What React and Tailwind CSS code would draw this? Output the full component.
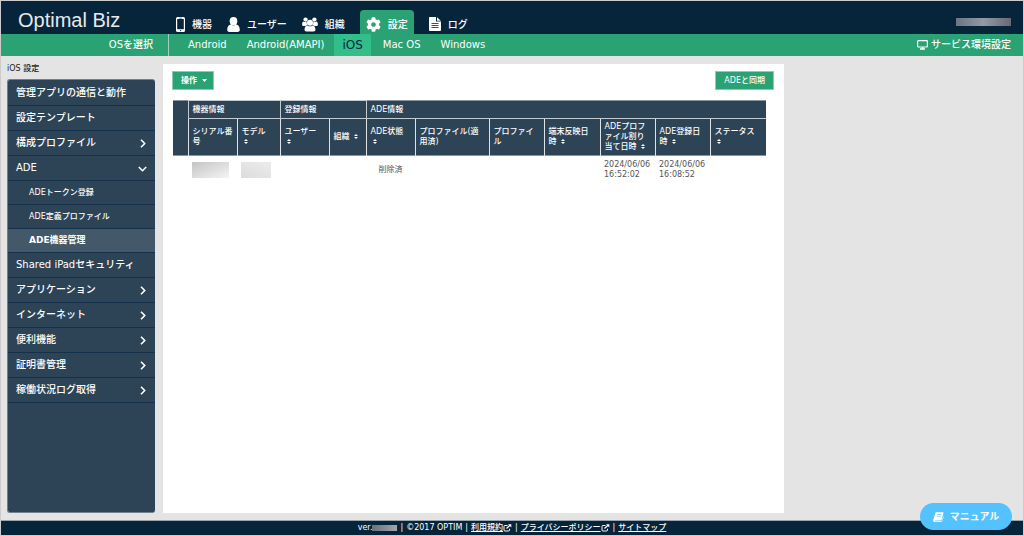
import React from 'react';
import { FaCog } from 'react-icons/fa';

const PhoneIcon = () => (
  <svg width="9" height="15" viewBox="0 0 9 15" fill="none">
    <rect width="9" height="15" rx="1.5" fill="#fff" />
    <rect x="1.2" y="2" width="6.6" height="10.2" fill="#06253b" />
    <rect x="3.2" y="0.8" width="2.6" height="0.6" fill="#06253b" />
    <circle cx="4.5" cy="13.6" r="0.7" fill="#06253b" />
  </svg>
);

const UserIcon = () => (
  <svg width="13" height="15" viewBox="0 0 13 15" fill="#fff">
    <ellipse cx="6.5" cy="4.2" rx="3.8" ry="4.2" />
    <path d="M0.2 12.8c0-3 1.4-5 3.8-5.2 1.500 1.300 3.500 1.300 5 0 2.400.2 3.800 2.200 3.800 5.200 0 1.300-.8 2.200-2 2.200H2.200C1 15 .2 14.100.2 12.800z" />
  </svg>
);

const GroupIcon = () => (
  <svg width="16" height="15" viewBox="0 0 17 15" fill="#fff">
    <circle cx="3.8" cy="2.300" r="2.300" />
    <circle cx="13.200" cy="2.300" r="2.300" />
    <path d="M.1 7.500c0-2 .7-3.300 1.800-3.300 1 .8 2.300.8 3.200.2-.4 1.400 0 2.600.9 3.500-1 .1-1.800.7-2.400 1.300H1.800C.9 9.200.1 8.600.1 7.500zM16.900 7.500c0-2-.7-3.300-1.800-3.300-1 .8-2.300.8-3.200.2.4 1.400 0 2.600-.9 3.500 1 .1 1.800.7 2.400 1.300h1.800c.9 0 1.700-.6 1.700-1.700z" />
    <circle cx="8.500" cy="5.600" r="3.200" />
    <path d="M2.700 13.200c0-2.700 1-4.500 3.100-4.700 1.500 1.300 3.900 1.300 5.400 0 2.100.2 3.100 2 3.100 4.700 0 1.100-.7 1.800-1.800 1.800h-8c-1.100 0-1.800-.7-1.800-1.800z" />
  </svg>
);

const LogIcon = () => (
  <svg width="12" height="14" viewBox="0 0 12 14">
    <path d="M.8 0H7v4.500h5v8.700c0 .5-.3.8-.8.8H.8c-.5 0-.8-.3-.8-.8V.8C0 .3.3 0 .8 0zM8 .2 11.800 3.700H8z" fill="#fff" />
    <path d="M2.500 6.500h7M2.500 8.500h7M2.500 10.500h7" stroke="#06253b" strokeWidth="0.8" />
  </svg>
);

const MonitorIcon = () => (
  <svg width="11" height="10" viewBox="0 0 11 10" fill="none" stroke="#fff">
    <rect x="0.600" y="0.600" width="9.800" height="6.400" rx="0.800" strokeWidth="1.200" />
    <path d="M3 9h5M5.500 7v2" strokeWidth="1.400" />
  </svg>
);

const ExternalIcon = () => (
  <svg width="9" height="8" viewBox="0 0 9 8" fill="none" stroke="#fff" className="inline-block align-middle">
    <path d="M4.500 1.500H2C1.300 1.500 1 1.800 1 2.500V6c0 .7.3 1 1 1h3.500c.7 0 1-.3 1-1V4.800" strokeWidth="1" />
    <path d="M3.500 4.500 7 1.200" strokeWidth="1.300" />
    <path d="M5 .2h3.300v3.300z" fill="#fff" stroke="none" />
  </svg>
);

const BookIcon = () => (
  <svg width="11" height="10" viewBox="0 0 11 10">
    <path d="M3.500.3h6.300c.6 0 .9.4.7 1L8.600 7.800c-.1.500-.5.800-1 .8H2c-.5 0-.6.7 0 .7h6.200c.4 0 .7-.2.800-.6l1.300-4.500.3.8-1.300 4.200c-.2.500-.6.800-1.100.8H1.800C.5 10-.1 8.900.3 7.800L2.300 1.200c.2-.6.600-.9 1.200-.9z" fill="#fff" />
    <path d="M4.300 2.500h4M3.800 4.200h4" stroke="#53c2ff" strokeWidth="0.700" />
  </svg>
);

const Chevron = ({ open }) => (
  <svg width="9" height="9" viewBox="0 0 9 9" fill="none" stroke="#fff" strokeWidth="1.600">
    <path d={open ? 'M.8 3 4.500 6.700 8.200 3' : 'M3 .8 6.700 4.500 3 8.200'} />
  </svg>
);

const SortIcon = () => (
  <svg width="4" height="5" viewBox="0 0 4 5" fill="#fff" className="mx-[2px] inline-block">
    <path d="M0 2 2 0l2 2zM0 3l2 2 2-2z" />
  </svg>
);

const tabs = [
  { label: '機器', icon: <PhoneIcon /> },
  { label: 'ユーザー', icon: <UserIcon /> },
  { label: '組織', icon: <GroupIcon /> },
  { label: '設定', icon: <FaCog size={15} />, active: true },
  { label: 'ログ', icon: <LogIcon /> },
];

const platforms = ['Android', 'Android(AMAPI)', 'iOS', 'Mac OS', 'Windows'];

const menu = [
  { label: '管理アプリの通信と動作' },
  { label: '設定テンプレート' },
  { label: '構成プロファイル', more: true },
  {
    label: 'ADE',
    more: true,
    children: ['ADEトークン登録', 'ADE定義プロファイル', 'ADE機器管理'],
  },
  { label: 'Shared iPadセキュリティ' },
  { label: 'アプリケーション', more: true },
  { label: 'インターネット', more: true },
  { label: '便利機能', more: true },
  { label: '証明書管理', more: true },
  { label: '稼働状況ログ取得', more: true },
];

const columns = [
  { label: 'シリアル番号' },
  { label: 'モデル', sort: true },
  { label: 'ユーザー', sort: true },
  { label: '組織', sort: true },
  { label: 'ADE状態', sort: true },
  { label: 'プロファイル(適用済)' },
  { label: 'プロファイル' },
  { label: '端末反映日時', sort: true },
  { label: 'ADEプロファイル割り当て日時', sort: true },
  { label: 'ADE登録日時', sort: true },
  { label: 'ステータス', sort: true },
];

const Header = () => (
  <header className="text-white">
    <div className="flex h-[33px] items-end bg-[#06253b]">
      <h1 className="w-[169px] shrink-0 pl-[17px] font-['Liberation_Sans',sans-serif] text-[20px] leading-[28px] text-[#e6e9eb]">
        Optimal Biz
      </h1>
      <nav className="flex gap-[3px]">
        {tabs.map((tab) => (
          <a
            key={tab.label}
            href="#"
            className={`flex h-6 items-center gap-[7px] rounded-t px-[6px] pt-[4px] text-[10px] font-medium ${
              tab.active ? 'mx-[6px] bg-[#2ba274]' : ''
            }`}
          >
            {tab.icon}
            {tab.label}
          </a>
        ))}
      </nav>
      <div className="mb-2 ml-auto mr-3 h-2 w-[55px] bg-linear-to-r from-[#6c7485] via-[#929aa6] to-[#6b6775]" />
    </div>
    <div className="flex h-[22px] items-stretch bg-[#2ba274] text-[10px] font-medium leading-[22px]">
      <div className="w-[168px] shrink-0 border-r border-[#9fd2be] pr-[15px] text-right">OSを選択</div>
      <nav className="flex pl-[9px]">
        {platforms.map((name) =>
          name === 'iOS' ? (
            <a key={name} href="#" className="mr-[2px] bg-[#31be89] px-2 text-[12px] text-[#06253b]">
              {name}
            </a>
          ) : (
            <a key={name} href="#" className="px-[10px]">
              {name}
            </a>
          )
        )}
      </nav>
      <a href="#" className="ml-auto mr-3 flex items-center gap-[3px]">
        <MonitorIcon />
        サービス環境設定
      </a>
    </div>
  </header>
);

const Sidebar = () => (
  <aside className="flex w-[148px] shrink-0 flex-col">
    <h2 className="h-[15px] text-[8px] font-medium leading-[10px] text-[#222]">iOS 設定</h2>
    <ul className="flex-1 rounded-[3px] border-b border-l border-t border-[#72808b] bg-[#2d4457] pt-px text-[10px] font-medium text-white">
      {menu.map((item) => (
        <li key={item.label}>
          <a href="#" className="flex h-[25px] items-center justify-between border-b border-[#15304a] px-2 leading-6">
            {item.label}
            {item.more && <Chevron open={Boolean(item.children)} />}
          </a>
          {item.children && (
            <ul>
              {item.children.map((child) => (
                <li key={child}>
                  <a
                    href="#"
                    className={`flex h-6 items-center border-b border-[#15304a] pl-[21px] ${
                      child === 'ADE機器管理' ? 'bg-[#435969] text-[9px] font-bold' : 'text-[8px]'
                    }`}
                  >
                    {child}
                  </a>
                </li>
              ))}
            </ul>
          )}
        </li>
      ))}
    </ul>
  </aside>
);

const DeviceTable = () => (
  <table className="mt-[10px] w-full table-fixed border-collapse text-left text-[8px] leading-[10px]">
    <colgroup>
      <col className="w-[15px]" />
      <col className="w-[49px]" />
      <col className="w-[43px]" />
      <col className="w-[49px]" />
      <col className="w-[37px]" />
      <col className="w-[49px]" />
      <col className="w-[74px]" />
      <col className="w-[55px]" />
      <col className="w-[56px]" />
      <col className="w-[55px]" />
      <col className="w-[55px]" />
      <col />
    </colgroup>
    <thead className="bg-[#2d4457] text-white">
      <tr className="h-[18px] border-t border-[#8996a0]">
        <th rowSpan={2} aria-label="選択" />
        <th colSpan={2} className="border border-[#c3cad0] px-1 font-medium">機器情報</th>
        <th colSpan={2} className="border border-[#c3cad0] px-1 font-medium">登録情報</th>
        <th colSpan={7} className="border-b border-l border-[#c3cad0] px-1 font-medium">ADE情報</th>
      </tr>
      <tr className="h-[37px] border-b border-[#8996a0]">
        {columns.map((col) => (
          <th key={col.label} className="border-l border-t border-[#dfe3e6] px-1 font-medium">
            {col.label}
            {col.sort && ' '}
            {col.sort && <SortIcon />}
          </th>
        ))}
      </tr>
    </thead>
    <tbody className="text-[#555]">
      <tr className="h-[28px]">
        <td />
        <td className="px-1">
          <div className="h-4 w-[37px] bg-linear-to-br from-[#c4c4c4] via-[#dcdcdc] to-[#f5f5f5]" />
        </td>
        <td className="px-1">
          <div className="h-4 w-[30px] bg-linear-to-tr from-[#dcdcdc] to-[#ececec]" />
        </td>
        <td />
        <td />
        <td className="text-center">削除済</td>
        <td />
        <td />
        <td />
        <td className="px-1">2024/06/06 16:52:02</td>
        <td className="px-1">2024/06/06 16:08:52</td>
        <td />
      </tr>
    </tbody>
  </table>
);

const Footer = () => (
  <footer className="flex h-[15px] items-center justify-center gap-[3px] border-t border-[#9aa5ac] bg-[#06253b] text-[8px] font-medium leading-[12px] text-white">
    <span className="flex items-center">
      ver.
      <span className="h-[6px] w-[25px] bg-linear-to-r from-[#66737f] to-[#a5a5a5]" />
    </span>
    <span>|</span>
    <span>©2017 OPTIM</span>
    <span>|</span>
    <a href="#" className="underline">利用規約<ExternalIcon /></a>
    <span>|</span>
    <a href="#" className="underline">プライバシーポリシー<ExternalIcon /></a>
    <span>|</span>
    <a href="#" className="underline">サイトマップ</a>
  </footer>
);

const App = () => (
  <div className="flex min-h-screen flex-col border border-[#ccc] bg-[#e4e4e4] font-['DejaVu_Sans','Noto_Sans_CJK_JP',sans-serif]">
    <Header />
    <div className="flex flex-1 gap-2 pb-[7px] pl-[6px] pt-2">
      <Sidebar />
      <main className="w-[621px] bg-white pb-4 pl-[9px] pr-[10px] pt-[7px]">
        <div className="flex justify-between">
          <button type="button" className="flex h-[19px] items-center gap-[5px] border border-[#8fcab3] bg-[#2ba274] pl-2 pr-[6px] text-[8px] font-bold text-white">
            操作
            <svg width="5" height="3" viewBox="0 0 5 3" fill="#fff">
              <path d="M0 0h5L2.500 3z" />
            </svg>
          </button>
          <button type="button" className="h-[19px] border border-[#8fcab3] bg-[#2ba274] px-2 text-[8px] font-medium leading-[16px] text-white">
            ADEと同期
          </button>
        </div>
        <div className="pl-px pr-2">
          <DeviceTable />
        </div>
      </main>
    </div>
    <Footer />
    <button
      type="button"
      className="fixed bottom-[6px] right-3 flex h-[27px] w-[92px] items-center justify-center gap-[6px] rounded-full bg-[#53c2ff] text-[10px] font-bold text-white"
    >
      <BookIcon />
      マニュアル
    </button>
  </div>
);

export default App;
